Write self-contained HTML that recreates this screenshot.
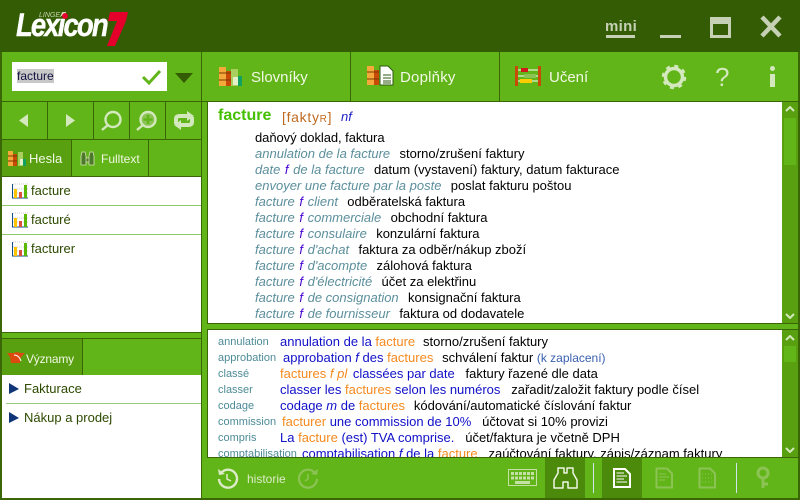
<!DOCTYPE html>
<html><head><meta charset="utf-8"><style>
html,body{margin:0;padding:0;background:#62b519}
#a{position:relative;width:800px;height:500px;overflow:hidden;background:#62b519;font-family:"Liberation Sans",sans-serif;font-size:13px}
#a div,#a svg{position:absolute}
.r{background:#3a6605}
.t{white-space:pre;line-height:16px;height:16px;color:#000}
i{font-style:italic}
.g{color:#5b8f9c;font-style:italic;margin-right:-1.5px}
.f{color:#4a00d0;font-style:italic;margin:0 1px}
.b{color:#1010c8}.o{color:#f58a1f}
.w{color:#f1f7e4}
.d{color:#2d4a00;line-height:16px;white-space:pre}
.m{font-size:15px;line-height:20px;white-space:pre}
.s{font-size:12px}
.k{left:10px;color:#4d8b96;font-size:11px}
</style></head><body><div id="a">
<div style="left:0;top:0;width:800px;height:52px;background:#335c04"></div>
<div style="left:16px;top:8px;height:34px;color:#fff;font:italic bold 32px/34px 'Liberation Sans',sans-serif;letter-spacing:-2.2px;transform:scaleX(.86);transform-origin:0 0;-webkit-text-stroke:.4px #fff;white-space:pre">Lexicon</div>
<div style="left:39px;top:12px;color:#c8d4b0;font:italic 7px/8px 'Liberation Sans',sans-serif">LINGEA</div>
<div style="left:62px;top:13px;width:6px;height:6px;border-radius:3px;background:#e4002b"></div>
<svg style="left:107px;top:12px" width="22" height="35"><path d="M3 0H21L19 9 8 34H0L10 9H1Z" fill="#e4002b"/></svg>
<div style="left:605px;top:18px;color:#c5d0b5;font:bold 15px/18px 'Liberation Sans',sans-serif;letter-spacing:.3px">mini</div>
<div style="left:606px;top:35px;width:29px;height:3px;background:#c5d0b5"></div>
<div style="left:660px;top:35px;width:21px;height:3px;background:#c5d0b5"></div>
<div style="left:710px;top:17px;width:21px;height:21px;background:#c5d0b5"></div>
<div style="left:713px;top:24px;width:15px;height:11px;background:#335c04"></div>
<svg style="left:759px;top:15px" width="24" height="24"><path d="M3 2 21 21M21 2 3 21" stroke="#c5d0b5" stroke-width="4.5"/></svg>

<div class="r" style="left:0;top:52px;width:2px;height:448px"></div>
<div class="r" style="left:798px;top:52px;width:2px;height:448px"></div>
<div class="r" style="left:0;top:498px;width:800px;height:2px"></div>
<div class="r" style="left:2px;top:101px;width:796px;height:1px"></div>
<div class="r" style="left:201px;top:52px;width:1px;height:448px"></div>
<div class="r" style="left:350px;top:52px;width:1px;height:49px"></div>
<div class="r" style="left:499px;top:52px;width:1px;height:49px"></div>

<div style="left:12px;top:62px;width:155px;height:29px;background:#fff"></div>
<div style="left:17px;top:69px;width:37px;height:14px;background:#c8c8c8"></div>
<div class="t s" style="left:17px;top:68px;color:#101040">facture</div>
<svg style="left:141px;top:69px" width="21" height="17"><path d="M2 8 8 14 19 2" fill="none" stroke="#62b519" stroke-width="3"/></svg>
<svg style="left:175px;top:73px" width="19" height="11"><path d="M0 0H18L9 10Z" fill="#335c04"/></svg>

<div class="r" style="left:2px;top:139px;width:199px;height:1px"></div>
<div class="r" style="left:47px;top:102px;width:1px;height:37px"></div>
<div class="r" style="left:93px;top:102px;width:1px;height:37px"></div>
<div class="r" style="left:129px;top:102px;width:1px;height:37px"></div>
<div class="r" style="left:165px;top:102px;width:1px;height:37px"></div>
<svg style="left:0;top:100px" width="202" height="40" fill="#d3e8bd" stroke="#d3e8bd">
<path d="M28 14V27L19 20.500Z" stroke="none"/><path d="M66 14V27L75 20.500Z" stroke="none"/>
<circle cx="113" cy="19.500" r="7.500" fill="none" stroke-width="2.400"/><path d="M108 25 102 30" stroke-width="2.400"/>
<circle cx="148" cy="19.500" r="7.500" fill="#8cc355" stroke-width="2.400"/><path d="M143 25 137 30" stroke-width="2.400"/><path d="M148 15V24M143.500 19.500H152.500" stroke="#62b519" stroke-width="2.400"/>
<path d="M176 24V19Q176 16 180 16H189M192 17V22Q192 25 188 25H179" fill="none" stroke-width="4"/><path d="M187 11 194 16 187 21ZM181 20 174 25 181 30Z" stroke="none"/>
</svg>

<div style="left:2px;top:140px;width:69px;height:36px;background:#58a010"></div>
<div class="r" style="left:71px;top:140px;width:1px;height:36px"></div>
<div class="r" style="left:148px;top:140px;width:1px;height:36px"></div>
<div class="r" style="left:2px;top:176px;width:199px;height:1px"></div>
<svg style="left:8px;top:151px" width="18" height="16"><rect width="5" height="15" fill="#f6a93b"/><rect x="5" y="3" width="4" height="12" fill="#c84a06"/><rect x="10" y="1" width="5" height="14" fill="#a9cf5f"/><rect x="12" y="8" width="3" height="6" fill="#e6f0c8"/><rect x="15" y="8" width="3" height="7" fill="#12a060"/><path d="M0 5H9M0 10H9" stroke="#7a3a00"/></svg>
<div class="t w" style="left:29px;top:151px">Hesla</div>
<svg style="left:80px;top:151px" width="15" height="15"><path d="M1 14V5L2 1H5L6 5V14ZM9 14V5L10 1H13L14 5V14ZM6 7H9V11H6Z" fill="#4a7a2a" stroke="#d5e3b0" stroke-width=".8"/></svg>
<div class="t w s" style="left:101px;top:151px">Fulltext</div>

<div style="left:2px;top:177px;width:199px;height:155px;background:#fff"></div>
<div style="left:2px;top:205px;width:199px;height:1px;background:#8fc866"></div>
<div style="left:2px;top:234px;width:199px;height:1px;background:#8fc866"></div>
<div class="r" style="left:2px;top:332px;width:199px;height:1px"></div>
<div class="r" style="left:2px;top:338px;width:199px;height:1px"></div>
<svg style="left:12px;top:183px" width="17" height="16"><path d="M.5 1V15H16" fill="none" stroke="#164f86"/><path d="M1 1H16M1 6H16M1 10H16" stroke="#ccc" stroke-dasharray="1 1"/><rect x="2" y="6" width="3" height="9" fill="#ffc400"/><rect x="7" y="9" width="3" height="6" fill="#d9503c"/><rect x="12" y="2" width="3" height="13" fill="#5bb800"/></svg>
<svg style="left:12px;top:212px" width="17" height="16"><path d="M.5 1V15H16" fill="none" stroke="#164f86"/><path d="M1 1H16M1 6H16M1 10H16" stroke="#ccc" stroke-dasharray="1 1"/><rect x="2" y="6" width="3" height="9" fill="#ffc400"/><rect x="7" y="9" width="3" height="6" fill="#d9503c"/><rect x="12" y="2" width="3" height="13" fill="#5bb800"/></svg>
<svg style="left:12px;top:241px" width="17" height="16"><path d="M.5 1V15H16" fill="none" stroke="#164f86"/><path d="M1 1H16M1 6H16M1 10H16" stroke="#ccc" stroke-dasharray="1 1"/><rect x="2" y="6" width="3" height="9" fill="#ffc400"/><rect x="7" y="9" width="3" height="6" fill="#d9503c"/><rect x="12" y="2" width="3" height="13" fill="#5bb800"/></svg>
<div class="t d" style="left:31px;top:183px">facture</div>
<div class="t d" style="left:31px;top:212px">facturé</div>
<div class="t d" style="left:31px;top:241px">facturer</div>

<div style="left:2px;top:339px;width:80px;height:36px;background:#58a010"></div>
<div class="r" style="left:82px;top:339px;width:1px;height:36px"></div>
<svg style="left:6px;top:350px" width="20" height="16"><path d="M1 3H8L10 2 15 3H19L15 7 14 13H5L4 7Z" fill="#dc4a10"/><path d="M8 5Q13 5 15 11" fill="none" stroke="#fff"/></svg>
<div class="t w s" style="left:26px;top:351px;letter-spacing:-.2px">Významy</div>
<div style="left:2px;top:375px;width:199px;height:123px;background:#fff"></div>
<div style="left:6px;top:403px;width:195px;height:1px;background:#9cc97a"></div>
<svg style="left:9px;top:383px" width="10" height="12"><path d="M0 0 10 6 0 11Z" fill="#0f3578"/></svg>
<svg style="left:9px;top:412px" width="10" height="12"><path d="M0 0 10 6 0 11Z" fill="#0f3578"/></svg>
<div class="t d" style="left:24px;top:381px">Fakturace</div>
<div class="t d" style="left:24px;top:410px">Nákup a prodej</div>

<svg style="left:219px;top:66px" width="24" height="22"><rect y="1" width="7" height="19" fill="#f6a93b"/><rect x="7" y="5" width="5" height="15" fill="#c84a06"/><rect x="12" y="3" width="7" height="17" fill="#a9cf5f"/><rect x="14" y="11" width="5" height="8" fill="#e6f0c8"/><rect x="19" y="10" width="4" height="10" fill="#12a060"/><path d="M0 7H12M0 14H12" stroke="#7a3a00"/></svg>
<div class="w m" style="left:251px;top:68px">Slovníky</div>
<svg style="left:367px;top:65px" width="27" height="22"><rect y="1" width="7" height="19" fill="#f6a93b"/><rect x="7" y="5" width="5" height="15" fill="#c84a06"/><path d="M0 7H12M0 14H12" stroke="#7a3a00"/><path d="M13 1H21L26 6V20H13Z" fill="#fff" stroke="#2c5a10"/><path d="M16 10H24M16 13H24M16 16H24M16 18H24" stroke="#2c5a10"/></svg>
<div class="w m" style="left:400px;top:68px;letter-spacing:.2px">Doplňky</div>
<svg style="left:514px;top:65px" width="28" height="22"><rect x="1" y="1" width="3" height="20" fill="#c84a06"/><rect x="24" y="1" width="3" height="20" fill="#c84a06"/><path d="M4 5H24M4 11H24M4 16H24" stroke="#fff"/><rect x="7" y="3" width="7" height="4" fill="#d01818"/><rect x="10" y="9" width="12" height="4" fill="#8cc355"/><rect x="6" y="14" width="12" height="4" fill="#ffcc00"/></svg>
<div class="w m" style="left:549px;top:68px">Učení</div>
<svg style="left:660px;top:63px" width="28" height="28"><circle cx="14" cy="14" r="8.500" fill="none" stroke="#d3e8bd" stroke-width="3.500"/><circle cx="14" cy="14" r="11" fill="none" stroke="#d3e8bd" stroke-width="2.500" stroke-dasharray="4 4.640"/></svg>
<div style="left:715px;top:62px;color:#d3e8bd;font-size:26px;line-height:30px">?</div>
<div style="left:770px;top:66px;width:5px;height:5px;border-radius:3px;background:#d3e8bd"></div>
<div style="left:770px;top:74px;width:5px;height:13px;background:#d3e8bd"></div>

<div style="left:207px;top:102px;width:1px;height:222px;background:#3a6605"></div>
<div style="left:208px;top:102px;width:574px;height:221px;background:#fff"></div>
<div class="r" style="left:207px;top:323px;width:591px;height:1px"></div>
<div style="left:782px;top:102px;width:16px;height:221px;background:#58a010"></div>
<div style="left:784px;top:118px;width:12px;height:47px;background:#62b519"></div>
<svg style="left:785px;top:106px" width="10" height="6"><path d="M1 5 5 1 9 5" fill="none" stroke="#d3e8bd" stroke-width="2"/></svg>
<svg style="left:785px;top:313px" width="10" height="6"><path d="M1 1 5 5 9 1" fill="none" stroke="#d3e8bd" stroke-width="2"/></svg>

<div class="t" style="left:218px;top:107px;height:18px;font:bold 16px/18px 'Liberation Sans',sans-serif;color:#44c000">facture</div>
<div class="t" style="left:282px;top:109px;font-size:14px;color:#c06a20;letter-spacing:.7px">[fakty<span style="font-size:10px">R</span>]</div>
<div class="t" style="left:341px;top:109px;color:#2020c8;font-style:italic">nf</div>
<div class="t" style="left:255px;top:130px;letter-spacing:-.06px">daňový doklad, faktura</div>
<div class="t" style="left:255px;top:146px"><span class="g">annulation de la facture</span>   storno/zrušení faktury</div>
<div class="t" style="left:255px;top:162px"><span class="g">date <span class="f">f</span> de la facture</span>   datum (vystavení) faktury, datum fakturace</div>
<div class="t" style="left:255px;top:178px"><span class="g">envoyer une facture par la poste</span>   poslat fakturu poštou</div>
<div class="t" style="left:255px;top:194px"><span class="g">facture <span class="f">f</span> client</span>   odběratelská faktura</div>
<div class="t" style="left:255px;top:210px"><span class="g">facture <span class="f">f</span> commerciale</span>   obchodní faktura</div>
<div class="t" style="left:255px;top:226px"><span class="g">facture <span class="f">f</span> consulaire</span>   konzulární faktura</div>
<div class="t" style="left:255px;top:242px"><span class="g">facture <span class="f">f</span> d'achat</span>   faktura za odběr/nákup zboží</div>
<div class="t" style="left:255px;top:258px"><span class="g">facture <span class="f">f</span> d'acompte</span>   zálohová faktura</div>
<div class="t" style="left:255px;top:274px"><span class="g">facture <span class="f">f</span> d'électricité</span>   účet za elektřinu</div>
<div class="t" style="left:255px;top:290px"><span class="g">facture <span class="f">f</span> de consignation</span>   konsignační faktura</div>
<div class="t" style="left:255px;top:306px"><span class="g">facture <span class="f">f</span> de fournisseur</span>   faktura od dodavatele</div>

<div class="r" style="left:207px;top:329px;width:591px;height:1px"></div>
<div style="left:207px;top:330px;width:1px;height:128px;background:#3a6605"></div>
<div style="left:208px;top:330px;width:574px;height:127px;background:#fff;overflow:hidden">
<div class="t k" style="top:4px">annulation</div>
<div class="t" style="left:72px;top:4px"><span class="b">annulation de la </span><span class="o" style="margin-right:-3px">facture</span>   storno/zrušení faktury</div>
<div class="t k" style="top:20px">approbation</div>
<div class="t" style="left:75px;top:20px"><span class="b">approbation <i>f</i> des </span><span class="o" style="margin-right:-2px">factures</span>   schválení faktur <span style="color:#3a60b0;font-size:12px">(k zaplacení)</span></div>
<div class="t k" style="top:36px">classé</div>
<div class="t" style="left:72px;top:36px"><span class="o">factures <i>f pl</i></span><span class="b" style="margin-left:2px"> classées par date</span>   faktury řazené dle data</div>
<div class="t k" style="top:52px">classer</div>
<div class="t" style="left:72px;top:52px"><span class="b">classer les </span><span class="o">factures</span><span class="b"> selon les numéros</span>   zařadit/založit faktury podle čísel</div>
<div class="t k" style="top:68px">codage</div>
<div class="t" style="left:72px;top:68px"><span class="b">codage <i>m</i> de </span><span class="o" style="margin-right:-2px">factures</span>   kódování/automatické číslování faktur</div>
<div class="t k" style="top:84px">commission</div>
<div class="t" style="left:74px;top:84px"><span class="o">facturer</span><span class="b"> une commission de 10%</span>   účtovat si 10% provizi</div>
<div class="t k" style="top:100px">compris</div>
<div class="t" style="left:72px;top:100px"><span class="b">La </span><span class="o">facture</span><span class="b"> (est) TVA comprise.</span>   účet/faktura je včetně DPH</div>
<div class="t k" style="top:116px">comptabilisation</div>
<div class="t" style="left:94px;top:116px"><span class="b">comptabilisation <i>f</i> de la </span><span class="o">facture</span>   zaúčtování faktury, zápis/záznam faktury</div>
</div>
<div class="r" style="left:207px;top:457px;width:591px;height:1px"></div>
<div style="left:782px;top:330px;width:16px;height:127px;background:#58a010"></div>
<div style="left:784px;top:346px;width:12px;height:16px;background:#62b519"></div>
<svg style="left:785px;top:335px" width="10" height="6"><path d="M1 5 5 1 9 5" fill="none" stroke="#d3e8bd" stroke-width="2"/></svg>
<svg style="left:785px;top:447px" width="10" height="6"><path d="M1 1 5 5 9 1" fill="none" stroke="#d3e8bd" stroke-width="2"/></svg>

<svg style="left:216px;top:467px" width="24" height="24" fill="none" stroke="#dcebc8" stroke-width="2.400"><path d="M5 6A9 9 0 1 1 3 12"/><path d="M11 7V12L15 14" stroke-width="1.500"/><path d="M2 2 3 8 9 7" fill="#dcebc8" stroke="none"/></svg>
<div class="t w s" style="left:247px;top:471px;color:#dcebc8">historie</div>
<svg style="left:296px;top:467px" width="24" height="24" fill="none" stroke="#8cc355" stroke-width="2.200"><path d="M19 6A9 9 0 1 0 21 12"/><path d="M12 7V12L9 14" stroke-width="1.500"/><path d="M22 2 21 8 15 7" fill="#8cc355" stroke="none"/></svg>
<svg style="left:508px;top:469px" width="30" height="20"><rect x=".5" y=".5" width="28" height="16" fill="none" stroke="#c5e0a5"/><path d="M3 3H26V6H3ZM3 7.500H26V10.500H3Z" fill="#c5e0a5"/><path d="M7 12H22V15H7Z" fill="#c5e0a5"/><path d="M6.500 3V11M10.500 3V11M14.500 3V11M18.500 3V11M22.500 3V11" stroke="#62b519"/></svg>
<div style="left:545px;top:458px;width:40px;height:40px;background:#4c8a0c"></div>
<svg style="left:553px;top:466px" width="25" height="24"><path d="M5 2H11V7H14V2H20V7L24 14V22H15V16H10V22H1V14L5 7Z" fill="none" stroke="#f0f7e4" stroke-width="1.500" stroke-linejoin="round"/></svg>
<div style="left:593px;top:463px;width:1px;height:30px;background:#cfe2f0"></div>
<div style="left:602px;top:458px;width:40px;height:40px;background:#4c8a0c"></div>
<svg style="left:612px;top:467px" width="20" height="22"><path d="M2 2H13L18 7V20H2Z" fill="none" stroke="#fff" stroke-width="2"/><path d="M4.500 6H12M4.500 9H15M4.500 12H12M4.500 15H15" stroke="#fff" stroke-width="1.100"/></svg>
<svg style="left:655px;top:467px" width="20" height="24" fill="none" stroke="#8cc355"><path d="M1.500 1.500H12L17 6.500V20.500H1.500Z" stroke-width="2"/><path d="M4 7H11M4 10H14M4 13H10"/></svg>
<svg style="left:698px;top:467px" width="20" height="24" fill="none" stroke="#8cc355"><path d="M1.500 1.500H12L17 6.500V20.500H1.500Z" stroke-width="2"/><path d="M4 7H14M4 11H14M4 15H14" stroke-dasharray="1 2"/></svg>
<div style="left:736px;top:463px;width:1px;height:30px;background:#cfe2f0"></div>
<svg style="left:755px;top:466px" width="18" height="24" fill="none" stroke="#8cc355" stroke-width="3"><circle cx="8" cy="7" r="5"/><path d="M8 12V22M8 18H13"/></svg>
</div></body></html>
